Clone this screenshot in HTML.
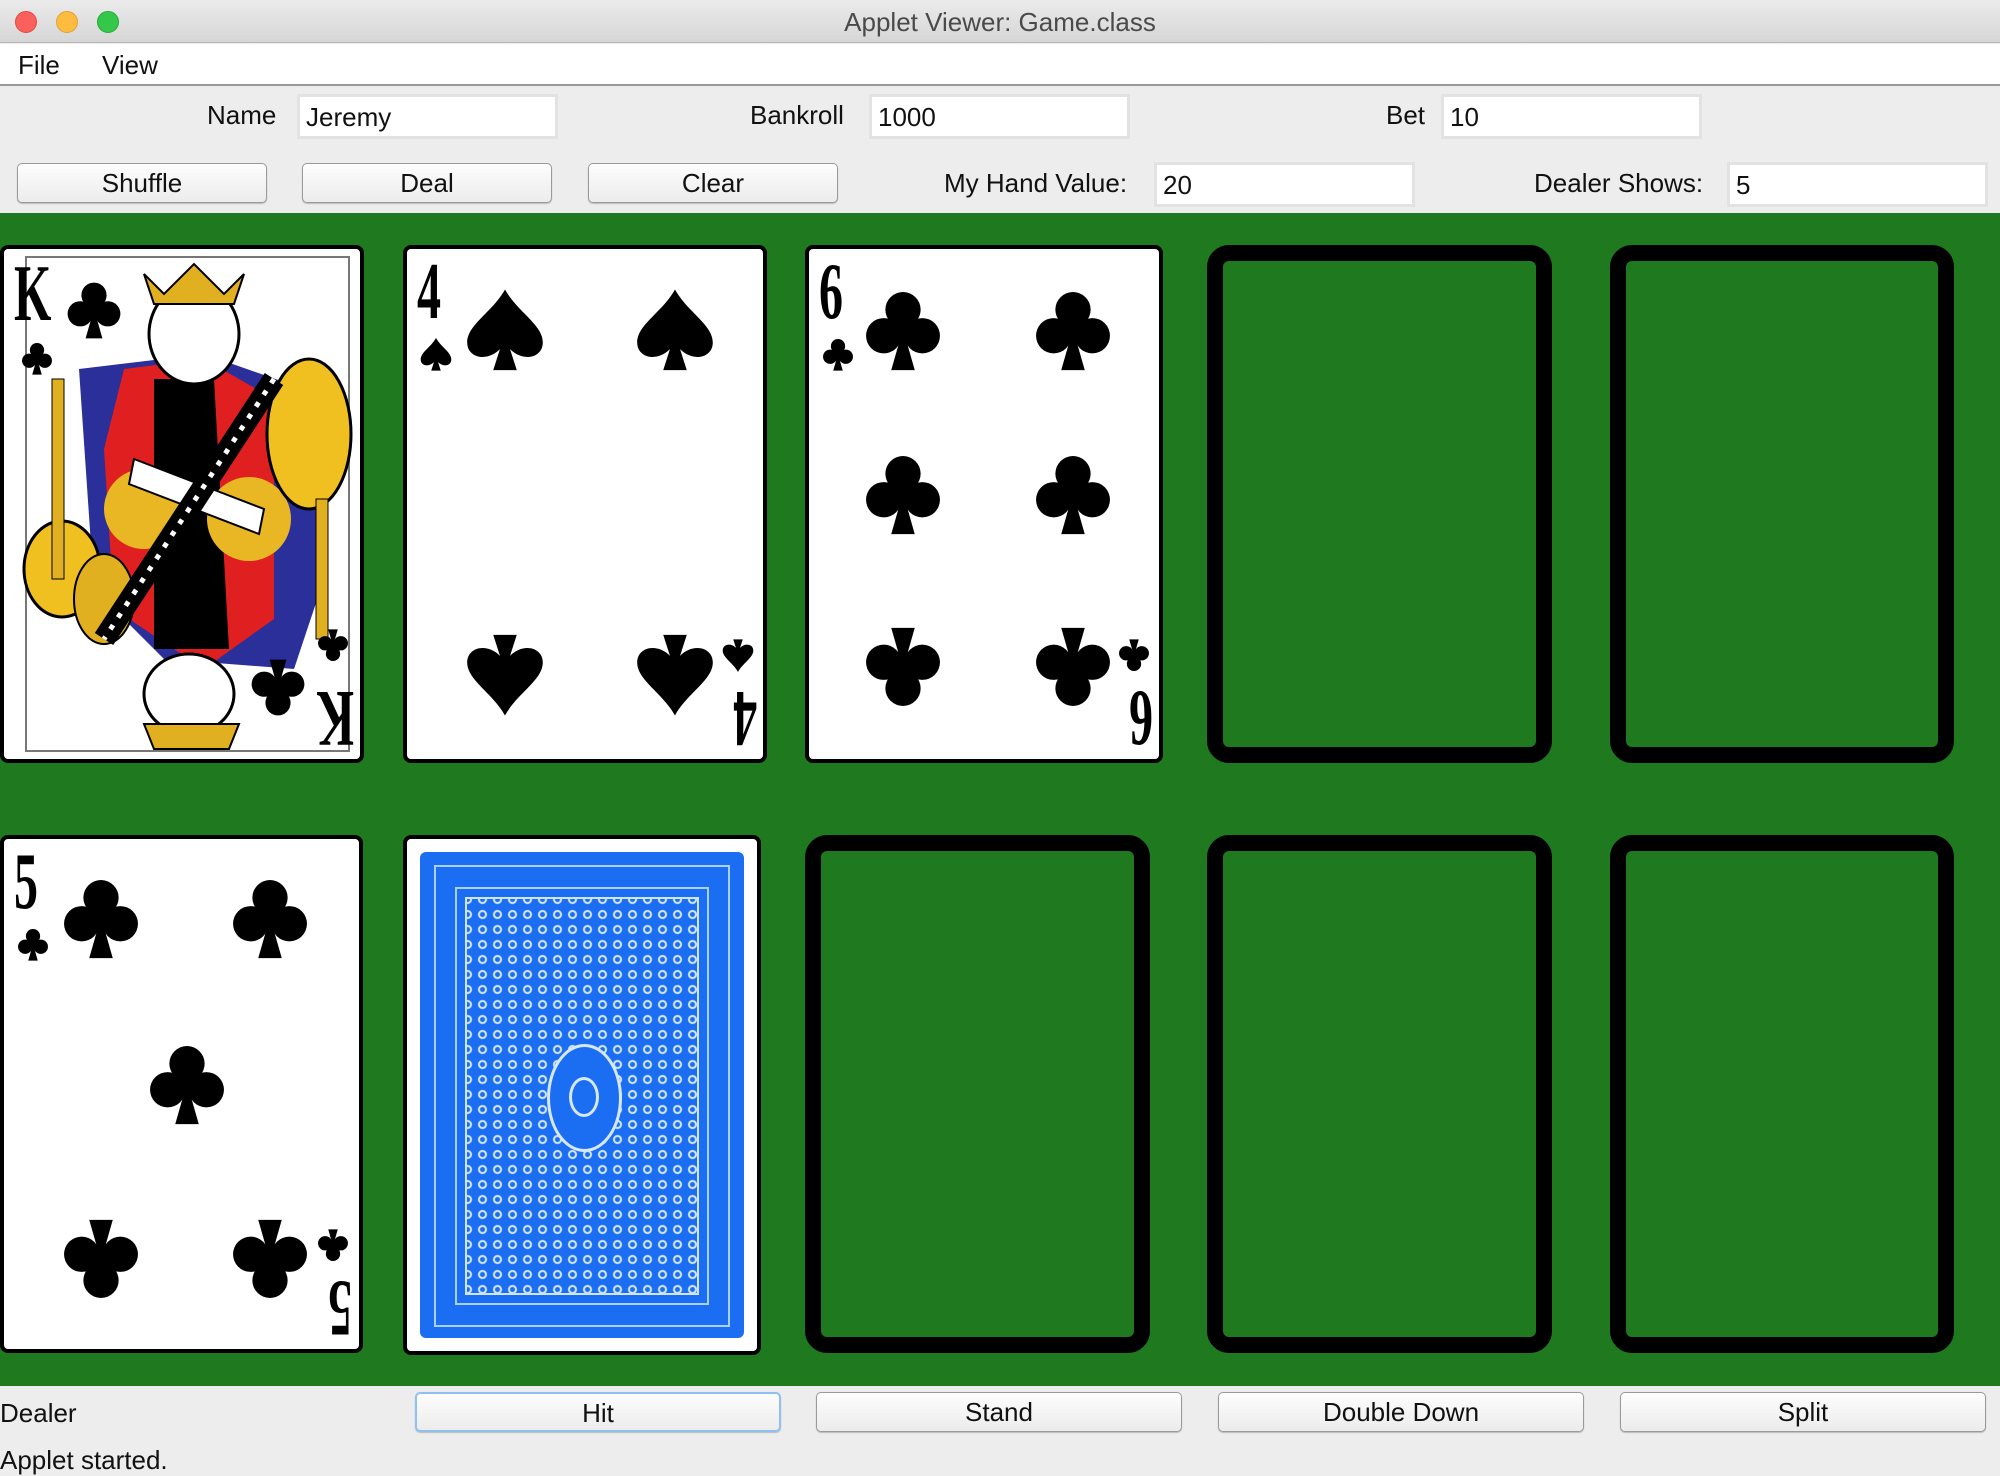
<!DOCTYPE html>
<html><head><meta charset="utf-8"><style>
*{margin:0;padding:0;box-sizing:border-box}
body{width:2000px;height:1476px;background:#ededed;font-family:"Liberation Sans",sans-serif;position:relative;overflow:hidden;color:#111}
.a{position:absolute}
.t{font-size:26px;white-space:nowrap}
.tf{position:absolute;background:#fff;border:3px solid #e2e2e2;font-size:26px;padding:3px 6px;line-height:34px}
.btn{position:absolute;background:linear-gradient(#fdfdfd,#ececec);border:1px solid #9a9a9a;border-radius:5px;font-size:26px;text-align:center;box-shadow:0 1px 1px #bbb}
.card{position:absolute;background:#fff;border:4px solid #000;border-radius:8px;overflow:hidden}
.slot{position:absolute;border:16px solid #000;border-radius:22px;background:#1f7a1f}
.pip{position:absolute;width:84px;height:84px}
.r{transform:rotate(180deg)}
.rank{position:absolute;font-family:"Liberation Serif",serif;font-weight:bold;font-size:80px;line-height:78px;transform:scaleX(.6);transform-origin:left top;color:#000}
.rank.rr{transform:rotate(180deg) scaleX(.6)}
</style></head><body>
<svg width="0" height="0" style="position:absolute"><defs>
<symbol id="c" viewBox="0 0 100 100"><circle cx="50" cy="27" r="21"/><circle cx="27" cy="58" r="21"/><circle cx="73" cy="58" r="21"/><rect x="40" y="35" width="20" height="30"/><path d="M50 50 L36 99 L64 99Z"/></symbol>
<symbol id="s" viewBox="0 0 100 100"><path d="M50 3 C35 30 5 45 5 66 C5 84 28 90 44 74 L36 99 L64 99 L56 74 C72 90 95 84 95 66 C95 45 65 30 50 3Z"/></symbol>
</defs></svg>

<div class="a" style="left:0;top:0;width:2000px;height:43px;background:linear-gradient(#ebebeb,#d6d6d6);border-bottom:1px solid #b5b5b5"></div>
<div class="a" style="left:15px;top:11px;width:22px;height:22px;border-radius:50%;background:#fc605c;border:1px solid #de4a46"></div>
<div class="a" style="left:56px;top:11px;width:22px;height:22px;border-radius:50%;background:#fdbc40;border:1px solid #dea236"></div>
<div class="a" style="left:97px;top:11px;width:22px;height:22px;border-radius:50%;background:#34c84a;border:1px solid #27aa35"></div>
<div class="a t" style="left:0;width:2000px;top:7px;text-align:center;color:#4a4a4a;font-size:26px">Applet Viewer: Game.class</div>
<div class="a" style="left:0;top:44px;width:2000px;height:42px;background:#fff;border-bottom:2px solid #999"></div>
<div class="a t" style="left:18px;top:50px">File</div>
<div class="a t" style="left:102px;top:50px">View</div>

<div class="a t" style="left:207px;top:100px">Name</div>
<div class="tf" style="left:297px;top:94px;width:261px;height:45px">Jeremy</div>
<div class="a t" style="left:750px;top:100px">Bankroll</div>
<div class="tf" style="left:869px;top:94px;width:261px;height:45px">1000</div>
<div class="a t" style="left:1386px;top:100px">Bet</div>
<div class="tf" style="left:1441px;top:94px;width:261px;height:45px">10</div>

<div class="btn" style="left:17px;top:163px;width:250px;height:40px;line-height:38px">Shuffle</div>
<div class="btn" style="left:302px;top:163px;width:250px;height:40px;line-height:38px">Deal</div>
<div class="btn" style="left:588px;top:163px;width:250px;height:40px;line-height:38px">Clear</div>
<div class="a t" style="left:944px;top:168px">My Hand Value:</div>
<div class="tf" style="left:1154px;top:162px;width:261px;height:45px">20</div>
<div class="a t" style="left:1534px;top:168px">Dealer Shows:</div>
<div class="tf" style="left:1727px;top:162px;width:261px;height:45px">5</div>

<div class="a" style="left:0;top:213px;width:2000px;height:1173px;background:#1f7a1f"></div>

<div class="card" style="left:0;top:245px;width:364px;height:518px">
<svg class="a" style="left:0;top:0" width="356" height="510" viewBox="0 0 356 510">
<rect x="22" y="8" width="323" height="494" fill="none" stroke="#777" stroke-width="2"/>
<path d="M75 120 L200 105 L300 140 L320 330 L290 420 L160 410 L90 340Z" fill="#2a2f9a"/>
<path d="M120 120 L200 110 L270 150 L270 370 L200 420 L110 360 L100 200Z" fill="#e02020"/>
<path d="M150 130 L210 130 L225 400 L150 400Z" fill="#000"/>
<circle cx="140" cy="260" r="40" fill="#e9b624"/><circle cx="245" cy="270" r="42" fill="#e9b624"/>
<ellipse cx="305" cy="185" rx="42" ry="75" fill="#f0c020" stroke="#000" stroke-width="3"/>
<ellipse cx="58" cy="320" rx="38" ry="48" fill="#f0c020" stroke="#000" stroke-width="3"/>
<ellipse cx="100" cy="350" rx="30" ry="45" fill="#e0b020" stroke="#000" stroke-width="2"/>
<rect x="48" y="130" width="12" height="200" fill="#e0b020" stroke="#000"/>
<rect x="312" y="250" width="12" height="140" fill="#e0b020" stroke="#000"/>
<path d="M130 210 L260 260 L255 285 L125 235Z" fill="#fff" stroke="#000" stroke-width="2"/>
<path d="M270 130 L100 390" stroke="#000" stroke-width="22"/>
<path d="M270 130 L100 390" stroke="#fff" stroke-width="5" stroke-dasharray="5 9"/>
<ellipse cx="190" cy="85" rx="45" ry="50" fill="#fff" stroke="#000" stroke-width="3"/>
<path d="M140 25 L160 45 L190 15 L220 45 L240 25 L230 55 L150 55Z" fill="#e0b020" stroke="#000" stroke-width="2"/>
<ellipse cx="185" cy="445" rx="45" ry="40" fill="#fff" stroke="#000" stroke-width="3"/>
<path d="M140 475 L235 475 L225 500 L150 500Z" fill="#e0b020" stroke="#000" stroke-width="2"/>
</svg>
<div class="rank" style="left:10px;top:6px">K</div>
<svg class="a" style="left:60px;top:30px" width="60" height="60"><use href="#c"/></svg>
<svg class="a" style="left:16px;top:92px" width="34" height="34"><use href="#c"/></svg>
<svg class="a r" style="left:244px;top:410px" width="60" height="60"><use href="#c"/></svg>
<svg class="a r" style="left:312px;top:380px" width="34" height="34"><use href="#c"/></svg>
<div class="rank rr" style="left:350px;top:508px">K</div>
</div>

<div class="card" style="left:403px;top:245px;width:364px;height:518px">
<div class="rank" style="left:10px;top:4px">4</div>
<svg class="a" style="left:12px;top:88px" width="34" height="34"><use href="#s"/></svg>
<svg class="pip" style="left:56px;top:38px"><use href="#s"/></svg>
<svg class="pip" style="left:226px;top:38px"><use href="#s"/></svg>
<svg class="pip r" style="left:56px;top:385px"><use href="#s"/></svg>
<svg class="pip r" style="left:226px;top:385px"><use href="#s"/></svg>
<svg class="a r" style="left:314px;top:390px" width="34" height="34"><use href="#s"/></svg>
<div class="rank rr" style="left:350px;top:508px">4</div>
</div>

<div class="card" style="left:805px;top:245px;width:358px;height:518px">
<div class="rank" style="left:10px;top:4px">6</div>
<svg class="a" style="left:12px;top:88px" width="34" height="34"><use href="#c"/></svg>
<svg class="pip" style="left:52px;top:38px"><use href="#c"/></svg>
<svg class="pip" style="left:222px;top:38px"><use href="#c"/></svg>
<svg class="pip" style="left:52px;top:202px"><use href="#c"/></svg>
<svg class="pip" style="left:222px;top:202px"><use href="#c"/></svg>
<svg class="pip r" style="left:52px;top:378px"><use href="#c"/></svg>
<svg class="pip r" style="left:222px;top:378px"><use href="#c"/></svg>
<svg class="a r" style="left:308px;top:390px" width="34" height="34"><use href="#c"/></svg>
<div class="rank rr" style="left:344px;top:508px">6</div>
</div>

<div class="slot" style="left:1207px;top:245px;width:345px;height:518px"></div>
<div class="slot" style="left:1610px;top:245px;width:344px;height:518px"></div>

<div class="card" style="left:0;top:835px;width:363px;height:518px">
<div class="rank" style="left:10px;top:4px">5</div>
<svg class="a" style="left:12px;top:88px" width="34" height="34"><use href="#c"/></svg>
<svg class="pip" style="left:55px;top:36px"><use href="#c"/></svg>
<svg class="pip" style="left:224px;top:36px"><use href="#c"/></svg>
<svg class="pip" style="left:141px;top:202px"><use href="#c"/></svg>
<svg class="pip r" style="left:55px;top:380px"><use href="#c"/></svg>
<svg class="pip r" style="left:224px;top:380px"><use href="#c"/></svg>
<svg class="a r" style="left:312px;top:390px" width="34" height="34"><use href="#c"/></svg>
<div class="rank rr" style="left:348px;top:508px">5</div>
</div>

<div class="card" style="left:403px;top:835px;width:358px;height:520px">
<div class="a" style="left:13px;top:13px;width:324px;height:486px;background:#1b6ef2;border-radius:6px"></div>
<div class="a" style="left:27px;top:26px;width:296px;height:462px;border:2px solid #a8d0ff"></div>
<div class="a" style="left:48px;top:48px;width:254px;height:418px;border:2px solid #a8d0ff"></div>
<div class="a" style="left:58px;top:58px;width:234px;height:398px;border:2px solid #cfe4ff;background-image:radial-gradient(circle,#1b6ef2 2px,#d6e8ff 3px,#d6e8ff 4px,transparent 5px);background-size:15px 15px;background-position:8px 8px"></div>
<div class="a" style="left:140px;top:205px;width:75px;height:108px;border-radius:50%;background:#1b6ef2;border:3px solid #d6e8ff"></div>
<div class="a" style="left:162px;top:238px;width:30px;height:40px;border-radius:50%;border:3px solid #d6e8ff"></div>
</div>

<div class="slot" style="left:805px;top:835px;width:345px;height:518px"></div>
<div class="slot" style="left:1207px;top:835px;width:345px;height:518px"></div>
<div class="slot" style="left:1610px;top:835px;width:344px;height:518px"></div>

<div class="a t" style="left:0;top:1398px">Dealer</div>
<div class="btn" style="left:415px;top:1392px;width:366px;height:40px;line-height:38px;border:2px solid #8fc0f0">Hit</div>
<div class="btn" style="left:816px;top:1392px;width:366px;height:40px;line-height:38px">Stand</div>
<div class="btn" style="left:1218px;top:1392px;width:366px;height:40px;line-height:38px">Double Down</div>
<div class="btn" style="left:1620px;top:1392px;width:366px;height:40px;line-height:38px">Split</div>
<div class="a t" style="left:0;top:1445px">Applet started.</div>
</body></html>
